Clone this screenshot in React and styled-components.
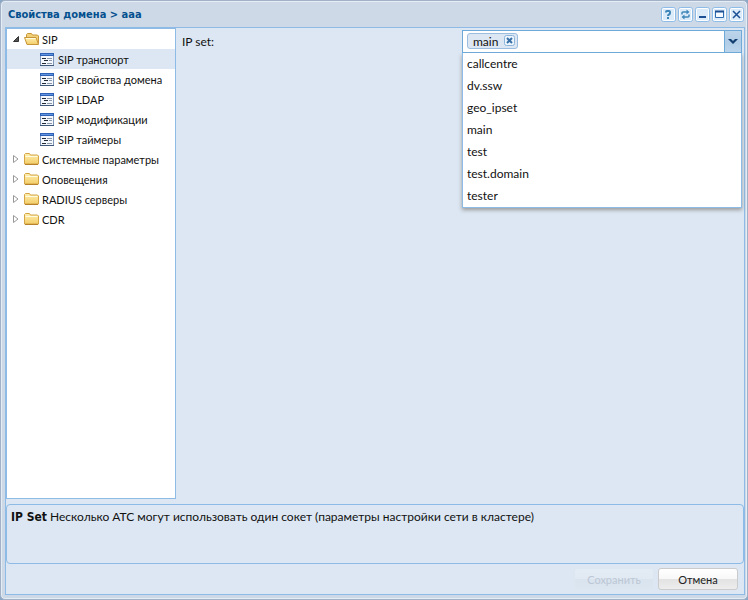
import React, { useState } from "react";
import styled, { createGlobalStyle, css } from "styled-components";

const headingFont = `Tahoma, "DejaVu Sans Condensed", sans-serif`;

const GlobalStyle = createGlobalStyle`
  *, *::before, *::after { box-sizing: border-box; }
  body {
    margin: 0;
    background: #8aa7c6;
    color: #111;
    font-family: Tahoma, Lato, sans-serif;
    font-size: 11px;
  }
  button, input { font: inherit; color: inherit; }
`;

const Window = styled.section`
  display: flex;
  flex-direction: column;
  min-height: 100vh;
  padding: 0 2px 4px 4px;
  background: #ced9e7;
  border: 1px solid #a2b1c5;
  border-radius: 5px;
  box-shadow: inset 0 0 0 1px #e4ecf5;
`;

const TitleBar = styled.header`
  display: flex;
  align-items: center;
  justify-content: space-between;
  height: 26px;
  padding: 0 1px 0 3px;
`;

const Title = styled.h1`
  margin: 0;
  color: #04508f;
  font-family: ${headingFont};
  font-size: 11px;
  font-weight: bold;
`;

const Tools = styled.div`
  display: flex;
  gap: 2px;
`;

const ToolButton = styled.button`
  display: block;
  width: 15px;
  height: 15px;
  padding: 0;
  border: 0;
  background: none;
  svg { display: block; }
`;

const Body = styled.div`
  display: flex;
  flex: 1;
  flex-direction: column;
  background: #dce7f3;
  border: 1px solid #8dbbe6;
`;

const Columns = styled.div`
  display: flex;
  flex: 1;
`;

const Tree = styled.nav`
  flex: 0 0 170px;
  margin-bottom: 5px;
  background: #fff;
  border: 1px solid #8dbbe6;
`;

const TreeList = styled.ul`
  margin: 0;
  padding: 0;
  list-style: none;
`;

const TreeRow = styled.a`
  display: flex;
  align-items: center;
  gap: 2px;
  height: 20px;
  padding-left: ${(p) => (p.$level ? 33 : 3)}px;
  background: ${(p) => (p.$selected ? "#dce7f3" : "transparent")};
  color: #111;
  text-decoration: none;
  white-space: nowrap;
  svg { flex: none; }
`;

const Form = styled.form`
  display: grid;
  flex: 1;
  grid-template-columns: 1fr 1fr;
  align-items: start;
  padding: 2px 2px 0 6px;
  font-size: 12px;
`;

const FieldLabel = styled.label`
  line-height: 24px;
`;

const Combo = styled.div`
  position: relative;
  display: flex;
  height: 23px;
  background: #fff;
  border: 1px solid #6fa9d8;
`;

const Chip = styled.span`
  display: flex;
  align-items: center;
  gap: 6px;
  height: 16px;
  margin: 2px 4px;
  padding: 0 1px 0 5px;
  background: #dce7f3;
  border: 1px solid #9abde0;
  border-radius: 3px;
`;

const ChipRemove = styled.button`
  width: 12px;
  height: 12px;
  padding: 0;
  border: 0;
  background: none;
  svg { display: block; }
`;

const ComboInput = styled.input`
  flex: 1;
  min-width: 0;
  padding: 0;
  border: 0;
  outline: 0;
  background: none;
`;

const ComboTrigger = styled.button`
  display: grid;
  place-items: center;
  width: 17px;
  padding: 0;
  background: linear-gradient(#bdd5ea, #b0cce6 50%, #bbd5ec);
  border: 0;
  border-left: 1px solid #6fa9d8;
`;

const Options = styled.ul`
  position: absolute;
  z-index: 1;
  top: calc(100% + 1px);
  left: -1px;
  right: -1px;
  margin: 0;
  padding: 0;
  list-style: none;
  background: #fff;
  border: 1px solid #8dbbe6;
  border-top: 0;
  box-shadow: 0 2px 4px #999;
  clip-path: inset(0 -6px -8px -6px);
`;

const Option = styled.li`
  height: 22px;
  padding: 0 4px;
  line-height: 22px;
`;

const Hint = styled.p`
  min-height: 60px;
  margin: 0;
  padding: 4px;
  border: 1px solid #8dbbe6;
  border-radius: 4px;
  font-size: 12px;
  line-height: 16px;
  b { font-family: ${headingFont}; }
`;

const Footer = styled.footer`
  display: flex;
  justify-content: flex-end;
  gap: 4px;
  padding: 4px 6px;
`;

const ActionButton = styled.button`
  width: 80px;
  height: 22px;
  padding: 0;
  background: linear-gradient(#fff, #f8f8f8 48%, #e3e3e3 52%, #ededed);
  border: 1px solid #cbcbcb;
  border-radius: 3px;
  color: #222;
  ${(p) => p.disabled && css`
    background: linear-gradient(#e3ebf5, #e1e9f3 48%, #dae4ef 52%, #dce6f1);
    border-color: #dde7f2;
    color: #bcc7d4;
  `}
`;

function Folder({ open }) {
  return (
    <svg width="16" height="14" viewBox="0 0 16 14" aria-hidden="true">
      <defs>
        <linearGradient id="folder" x1="0" y1="0" x2="0" y2="1">
          <stop offset="0" stopColor="#fff0b0" />
          <stop offset="1" stopColor="#f3cd68" />
        </linearGradient>
      </defs>
      {open ? (
        <>
          <path d="M2.500 11.500V2.500l1-1h4l1 1.500h5l1 1v7.500z" fill="#f2d078" stroke="#c8963a" />
          <path d="M.5 5.500h11.500l2.500 7H3z" fill="url(#folder)" stroke="#c8963a" />
          <path d="M2 6.500h9.500" stroke="#fffbe0" />
        </>
      ) : (
        <>
          <path d="M.5 12V2.500l1-1h4l1 1.500h7l1 1v8z" fill="url(#folder)" stroke="#d3a547" />
          <path d="M1.500 4.500h12" stroke="#fffbe0" />
          <path d="M1 12.500h13" stroke="#b8822d" />
        </>
      )}
    </svg>
  );
}

function Leaf() {
  return (
    <svg width="16" height="13" viewBox="0 0 16 13" shapeRendering="crispEdges" aria-hidden="true">
      <path fill="#f4f8fd" d="M0 0h14v13H0z" />
      <path fill="#2f62b5" d="M0 0h14v3H0z" />
      <path fill="#5f95e0" d="M1 1h12v1H1z" />
      <path fill="#7d96b8" d="M0 3h1v9H0zM13 3h1v9h-1z" />
      <path fill="#3f5778" d="M0 12h14v1H0z" />
      <path fill="#1f2a36" d="M2 5h4v1H2zM4 7h4v1H4zM2 10h4v1H2z" />
      <path fill="#8796a8" d="M7 5h5v1H7zM9 7h3v1H9zM7 10h5v1H7z" />
    </svg>
  );
}

function Arrow({ open }) {
  return (
    <svg width="12" height="12" viewBox="0 0 12 12" aria-hidden="true">
      {open ? (
        <path d="M8.500 3.500v5h-5z" fill="#555" stroke="#333" />
      ) : (
        <path d="M3.500 2.500v7l4.500-3.500z" fill="#fff" stroke="#999" />
      )}
    </svg>
  );
}

const toolShapes = {
  help: (
    <>
      <path d="M5 5.500V5q0-1 1-1h2q1 0 1 1v1q0 1-1 1.500T7 9" stroke="#3f86b8" strokeWidth="2" />
      <path d="M6 10h2v2H6z" fill="#3f86b8" />
    </>
  ),
  refresh: (
    <>
      <path d="M4 7.500V6q0-1 1-1h4M11 7.500V9q0 1-1 1H6" stroke="#3f86b8" strokeWidth="1.500" />
      <path d="M8.500 2.500l3 2.500-3 2.500zM6.500 7.500l-3 2.500 3 2.500z" fill="#3f86b8" />
    </>
  ),
  minimize: <path d="M4 10h7" stroke="#1c4f93" strokeWidth="2" />,
  maximize: (
    <>
      <path d="M3.500 4.500h8v6h-8z" fill="#f4faff" stroke="#2d69ad" />
      <path d="M3 4.500h9" stroke="#1c4f93" strokeWidth="2" />
    </>
  ),
  close: <path d="M4 4l7 7M11 4l-7 7" stroke="#1c4f93" strokeWidth="1.500" />,
};

function Tool({ kind, label }) {
  return (
    <ToolButton type="button" aria-label={label}>
      <svg width="15" height="15" viewBox="0 0 15 15" fill="none">
        <rect x=".5" y=".5" width="14" height="14" rx="2" fill="#dcebfa" stroke="#8dbce8" />
        <rect x="1.500" y="1.500" width="12" height="12" rx="1" stroke="#fff" />
        {toolShapes[kind]}
      </svg>
    </ToolButton>
  );
}

const sipPages = ["SIP транспорт", "SIP свойства домена", "SIP LDAP", "SIP модификации", "SIP таймеры"];
const groups = ["Системные параметры", "Оповещения", "RADIUS серверы", "CDR"];
const ipSets = ["callcentre", "dv.ssw", "geo_ipset", "main", "test", "test.domain", "tester"];

export default function App() {
  const [page, setPage] = useState(sipPages[0]);
  const [open, setOpen] = useState(true);
  const [chosen, setChosen] = useState(["main"]);

  return (
    <>
      <GlobalStyle />
      <Window>
        <TitleBar>
          <Title>Свойства домена &gt; aaa</Title>
          <Tools>
            <Tool kind="help" label="Справка" />
            <Tool kind="refresh" label="Обновить" />
            <Tool kind="minimize" label="Свернуть" />
            <Tool kind="maximize" label="Развернуть" />
            <Tool kind="close" label="Закрыть" />
          </Tools>
        </TitleBar>
        <Body>
          <Columns>
            <Tree aria-label="Разделы">
              <TreeList>
                <li>
                  <TreeRow href="#sip"><Arrow open /><Folder open />SIP</TreeRow>
                </li>
                {sipPages.map((name) => (
                  <li key={name}>
                    <TreeRow href="#sip" $level={1} $selected={name === page} onClick={() => setPage(name)}>
                      <Leaf />{name}
                    </TreeRow>
                  </li>
                ))}
                {groups.map((name) => (
                  <li key={name}>
                    <TreeRow href="#group"><Arrow /><Folder />{name}</TreeRow>
                  </li>
                ))}
              </TreeList>
            </Tree>
            <Form id="domain-form" onSubmit={(e) => e.preventDefault()}>
              <FieldLabel htmlFor="ip-set">IP set:</FieldLabel>
              <Combo>
                {chosen.map((name) => (
                  <Chip key={name}>
                    {name}
                    <ChipRemove type="button" aria-label={`Удалить ${name}`} onClick={() => setChosen(chosen.filter((n) => n !== name))}>
                      <svg width="12" height="12" viewBox="0 0 12 12" fill="none">
                        <rect x=".5" y=".5" width="10" height="10" rx="2" fill="#edf5fd" stroke="#8db5dc" />
                        <path d="M3 3l5 5M8 3l-5 5" stroke="#3a70a8" strokeWidth="2" />
                      </svg>
                    </ChipRemove>
                  </Chip>
                ))}
                <ComboInput id="ip-set" type="text" role="combobox" aria-expanded={open} aria-controls="ip-set-options" autoComplete="off" />
                <ComboTrigger type="button" aria-label="Показать список" onClick={() => setOpen(!open)}>
                  <svg width="10" height="8" viewBox="0 0 10 8" fill="none">
                    <path d="M0 1h3l2 2 2-2h3L5 6z" fill="#123f70" />
                  </svg>
                </ComboTrigger>
                {open && (
                  <Options id="ip-set-options" role="listbox" aria-label="IP set">
                    {ipSets.map((name) => (
                      <Option
                        key={name}
                        role="option"
                        aria-selected={chosen.includes(name)}
                        onClick={() => !chosen.includes(name) && setChosen([...chosen, name])}
                      >
                        {name}
                      </Option>
                    ))}
                  </Options>
                )}
              </Combo>
            </Form>
          </Columns>
          <Hint>
            <b>IP Set</b> Несколько АТС могут использовать один сокет (параметры настройки сети в кластере)
          </Hint>
          <Footer>
            <ActionButton type="submit" form="domain-form" disabled>Сохранить</ActionButton>
            <ActionButton type="button">Отмена</ActionButton>
          </Footer>
        </Body>
      </Window>
    </>
  );
}
